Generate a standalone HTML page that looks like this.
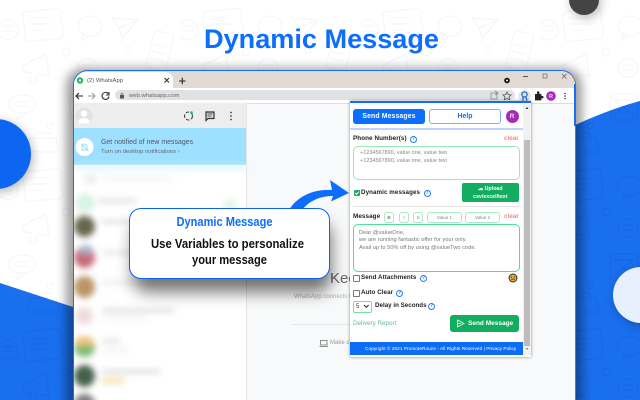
<!DOCTYPE html>
<html><head><meta charset="utf-8"><style>
html,body{margin:0;padding:0;width:640px;height:400px;overflow:hidden;background:#fff;font-family:"Liberation Sans",sans-serif}
#w{position:absolute;left:0;top:0;width:640px;height:400px;overflow:hidden;filter:blur(.3px)}
.a{position:absolute}
.t{position:absolute;white-space:nowrap;line-height:10px;height:10px}
.b{font-weight:bold;color:#222}
.q{position:absolute;width:5px;height:5px;border:1px solid #2b7cf0;border-radius:50%;font:bold 5px/5px "Liberation Sans",sans-serif;color:#2b7cf0;text-align:center}
.cb{position:absolute;width:5px;height:5px;border:.8px solid #777;border-radius:1px;background:#fff}
.chip{position:absolute;top:212px;height:9px;border:1px solid #a9e9c4;border-radius:3px;font:4.6px/9px "Liberation Sans",sans-serif;color:#7a8a80;text-align:center}
</style></head><body><div id="w">
<svg class="a" style="left:0;top:0" width="640" height="400" viewBox="0 0 640 400">
<defs>
<g id="dd" fill="none" stroke-width="1" stroke-linejoin="round" stroke-linecap="round">
<rect x="24" y="6" width="38" height="30" rx="4" transform="rotate(-6 43 21)"/>
<path d="M30 14h18M30 20h22M30 26h14"/>
<ellipse cx="90" cy="22" rx="12" ry="10"/><path d="M84 30l-3 7 8-5"/>
<path d="M112 14l26 2-16 18-3-10z M119 24l19-8"/>
<rect x="150" y="28" width="20" height="38" rx="3" transform="rotate(14 160 47)"/>
<path d="M153 40l13 3M151 47l13 3M150 54l13 3"/>
<circle cx="8" cy="26" r="10"/><path d="M3 22h10M3 27h10"/>
<path d="M22 62l24-12 3 22-12-2-2 10-5-2 1-9-7-1z"/>
<circle cx="66" cy="48" r="4"/><circle cx="128" cy="46" r="3"/>
<ellipse cx="88" cy="64" rx="10" ry="9"/><path d="M83 61h10M83 66h10"/>
<rect x="70" y="90" width="28" height="26" rx="3"/><path d="M70 92l14 12 14-12M70 114l14-10 14 10M75 96h18"/>
<ellipse cx="22" cy="100" rx="14" ry="9"/><path d="M14 98h16M14 102h16M20 109l-4 7 9-6"/>
<path d="M120 78c8-6 16 0 14 8l-8 12-8-11c-2-4-1-7 2-9z"/><circle cx="126" cy="85" r="3"/>
<circle cx="155" cy="112" r="11"/><path d="M146 108c5 3 12 3 18 0M150 120c3-6 3-12 0-17M160 120c-3-6-3-12 0-17"/>
<circle cx="112" cy="112" r="4"/><circle cx="50" cy="122" r="3"/>
<path d="M30 134h26l3 14H27z M36 134v-5h14v5"/>
<path d="M100 132l24-6-4 20-8-6-6 6z"/>
<path d="M144 136c6-5 20-4 24 2l-4 12-18 2z"/>
</g>
<pattern id="pw" x="0" y="4" width="180" height="160" patternUnits="userSpaceOnUse"><use href="#dd" stroke="#f3f5fa"/></pattern>
<pattern id="pb" x="0" y="4" width="180" height="160" patternUnits="userSpaceOnUse"><use href="#dd" stroke="#1767e2"/></pattern>
<filter id="sb" x="-50%" y="-50%" width="200%" height="200%"><feGaussianBlur stdDeviation="5"/></filter>
</defs>
<rect width="640" height="400" fill="#fff"/>
<rect width="640" height="400" fill="url(#pw)"/>
<path d="M0 283L73 307 300 340 480 190 575 125Q610 109 640 101V400H0Z" fill="#1a6fee"/>
<path d="M0 283L73 307 300 340 480 190 575 125Q610 109 640 101V400H0Z" fill="url(#pb)"/>
<circle cx="-2" cy="157" r="35" fill="#000" opacity=".28" filter="url(#sb)"/>
<circle cx="-4" cy="154" r="35" fill="#0d66f2"/>
<circle cx="643" cy="298" r="28" fill="#000" opacity=".28" filter="url(#sb)"/>
<circle cx="641" cy="295" r="28" fill="#e8f0fd"/>
<circle cx="586" cy="3" r="15" fill="#000" opacity=".28" filter="url(#sb)"/>
<circle cx="584" cy="0" r="15" fill="#444"/>
<text x="204" y="48" font-family="Liberation Sans" font-weight="bold" font-size="27" fill="#0d6efd" textLength="235" lengthAdjust="spacingAndGlyphs">Dynamic Message</text>
</svg>

<!-- window shadow -->
<div class="a" style="left:66px;top:68px;width:516px;height:340px;background:rgba(0,0,0,.38);border-radius:18px 18px 0 0;filter:blur(5px)"></div>

<!-- browser window -->
<div class="a" style="left:73px;top:70px;width:501px;height:340px;border:1.5px solid #1a6ff0;border-right-color:#6e7480;border-radius:15px 15px 0 0;background:#f8f9fa;overflow:hidden">
 <div class="a" style="left:0;top:0;width:501px;height:17px;background:#e3dad6"></div>
 <div class="a" style="left:0;top:1px;width:99px;height:16px;background:#fff;border-radius:8px 8px 0 0"></div>
 <div class="a" style="left:0;top:17px;width:501px;height:15px;background:#fff;border-bottom:1px solid #ddd"></div>
 <div class="a" style="left:41px;top:19px;width:400px;height:10px;background:#dfe1e5;border-radius:5px"></div>
 <!-- WA left -->
 <div class="a" style="left:0;top:32px;width:172px;height:310px;background:#fff;border-right:1px solid #e6e6e6"></div>
 <div class="a" style="left:0;top:32px;width:172px;height:25px;background:#ededed"></div>
 <div class="a" style="left:0;top:57px;width:172px;height:37px;background:#9de0ff"></div>
 <div class="a" style="left:0;top:94px;width:172px;height:240px;overflow:hidden;filter:blur(3.2px)">
  <div class="a" style="left:-4px;top:-4px;width:180px;height:8px;background:#d5f2fd"></div>
  <div class="a" style="left:10px;top:9px;width:14px;height:10px;background:#eee;border-radius:5px"></div><div class="a" style="left:28px;top:12px;width:70px;height:3px;background:#eee"></div>
  <div class="a" style="left:1px;top:29px;width:20px;height:18px;background:#d6f3e3;border-radius:50%"></div><div class="a" style="left:24px;top:34px;width:38px;height:4px;background:#ddd"></div><div class="a" style="left:150px;top:34px;width:12px;height:10px;background:#def5e6;border-radius:50%"></div>
  <div class="a" style="left:0;top:51px;width:21px;height:21px;background:#66674c;border-radius:50%"></div><div class="a" style="left:28px;top:55px;width:50px;height:3px;background:#d4d4d4"></div>
  <div class="a" style="left:0;top:82px;width:21px;height:21px;background:#c96a78;border-radius:50%"></div><div class="a" style="left:5px;top:80px;width:14px;height:10px;background:#a9b3c8;border-radius:50%"></div><div class="a" style="left:28px;top:86px;width:40px;height:3px;background:#ddd"></div>
  <div class="a" style="left:0;top:111px;width:21px;height:22px;background:#bd9468;border-radius:50%"></div><div class="a" style="left:28px;top:116px;width:32px;height:3px;background:#e5e5e5"></div>
  <div class="a" style="left:1px;top:142px;width:18px;height:18px;background:#f0dcdc;border-radius:50%"></div><div class="a" style="left:28px;top:144px;width:72px;height:3px;background:#d0d0d0"></div><div class="a" style="left:28px;top:152px;width:45px;height:2px;background:#e8e8e8"></div>
  <div class="a" style="left:0;top:171px;width:21px;height:11px;background:#ecc27e;border-radius:10px 10px 0 0"></div><div class="a" style="left:0;top:181px;width:21px;height:11px;background:#7fbb77;border-radius:0 0 10px 10px"></div><div class="a" style="left:28px;top:175px;width:18px;height:3px;background:#d6d6d6"></div><div class="a" style="left:28px;top:184px;width:28px;height:2px;background:#e5e5e5"></div>
  <div class="a" style="left:0;top:200px;width:21px;height:22px;background:#46604a;border-radius:50%"></div><div class="a" style="left:28px;top:205px;width:58px;height:3px;background:#cfcfcf"></div><div class="a" style="left:28px;top:213px;width:22px;height:5px;background:#f4dea0"></div>
  <div class="a" style="left:0;top:229px;width:21px;height:21px;background:#777;border-radius:50%"></div>
 </div>
</div>
<div class="a" style="left:574px;top:84px;width:1.500px;height:42px;background:#1a6ff0"></div>

<!-- toolbar icons -->
<svg class="a" style="left:0;top:0" width="640" height="400" viewBox="0 0 640 400" fill="none">
 <circle cx="80" cy="80.500" r="3.200" fill="#1db954"/><circle cx="80" cy="80.500" r="1.200" fill="#fff"/>
 <path d="M164.500 78l4.500 4.500m0-4.500l-4.500 4.500" stroke="#333" stroke-width="1.100"/>
 <path d="M179 81h6.500m-3.250-3.250v6.500" stroke="#222" stroke-width="1.100"/>
 <circle cx="507" cy="80.500" r="2.800" fill="#111"/><circle cx="507" cy="80.500" r="1" fill="#eee"/>
 <path d="M523 76.500h5" stroke="#555"/><rect x="543" y="74" width="4" height="4" stroke="#777" stroke-width=".8"/><path d="M562 74l4.500 4.500m0-4.500l-4.500 4.500" stroke="#666" stroke-width=".8"/>
 <path d="M83 96h-7m3-3l-3 3 3 3" stroke="#222" stroke-width="1.100"/>
 <path d="M88 96h7m-3-3l3 3-3 3" stroke="#999" stroke-width="1.100"/>
 <path d="M108.500 94a3.500 3.500 0 1 0 .5 2.500M109 92v3h-3" stroke="#333" stroke-width="1.100"/>
 <rect x="120" y="95" width="4" height="3.500" fill="#555"/><path d="M121 95v-1a1 1 0 0 1 2 0v1" stroke="#555" stroke-width=".6"/>
 <path d="M491 93h6v6h-6zM495 91l3 2-3 2" stroke="#888" stroke-width=".8"/>
 <path d="M507 92l1.200 2.600 2.800.3-2 2 .6 2.800-2.600-1.400-2.600 1.400.6-2.800-2-2 2.800-.3z" stroke="#555" stroke-width=".8"/>
 <circle cx="524.500" cy="96" r="6" fill="#dbe4f0"/><circle cx="524.500" cy="94.500" r="2.600" stroke="#1554c0" stroke-width="1.100"/><path d="M523 97v3.500m3-3.200l1 3.200" stroke="#1554c0" stroke-width="1.100"/>
 <path d="M535 94h2v-1.500a1.200 1.200 0 0 1 2.400 0V94h2v2h1a1.200 1.200 0 0 1 0 2.400h-1v2h-6.400z" fill="#222"/>
 <circle cx="551" cy="96" r="4.800" fill="#a52bb5"/><text x="551" y="98" font-size="5.500" font-weight="bold" fill="#f3d8f6" text-anchor="middle" font-family="Liberation Sans">R</text>
 <circle cx="565" cy="93.500" r=".8" fill="#333"/><circle cx="565" cy="96" r=".8" fill="#333"/><circle cx="565" cy="98.500" r=".8" fill="#333"/>
 <!-- WA header -->
 <circle cx="84" cy="116" r="8.500" fill="#dfe3e5"/><circle cx="84" cy="113.500" r="3.200" fill="#fff"/><path d="M78 122c1-3 3-4 6-4s5 1 6 4c-3 2.500-9 2.500-12 0z" fill="#fff"/>
 <circle cx="188.500" cy="116" r="4" stroke="#444" stroke-width="1.100" stroke-dasharray="3.500 1.800"/><circle cx="191.500" cy="112.500" r="1.300" fill="#19b58c"/>
 <path d="M206 112h8v6.500h-6l-2 2z" stroke="#333" stroke-width="1.200" fill="#ddd"/><path d="M207.500 114h5m-5 2h4" stroke="#333" stroke-width=".7"/>
 <circle cx="231" cy="112.500" r=".9" fill="#444"/><circle cx="231" cy="116" r=".9" fill="#444"/><circle cx="231" cy="119.500" r=".9" fill="#444"/>
 <!-- banner -->
 <circle cx="84.500" cy="147" r="9" fill="#fff"/><path d="M82 150v-3.500a2.500 2.500 0 0 1 5 0V150zM81 150h7M81.500 144l7 7" stroke="#9ddcf7" stroke-width="1"/>
 <!-- right empty state -->
 <path d="M292 324.500h58" stroke="#e4e6e8"/>
 <rect x="320.500" y="340.500" width="6.500" height="4.500" stroke="#777" stroke-width=".8"/><path d="M319.500 346.500h8.500" stroke="#777" stroke-width=".8"/>
</svg>

<div class="t" style="left:87px;top:75.500px;font-size:5.900px;color:#555">(2) WhatsApp</div>
<div class="t" style="left:129px;top:91px;font-size:5.900px;color:#666">web.whatsapp.com</div>
<div class="t" style="left:101px;top:138px;font-size:6.900px;color:#556;letter-spacing:.05px">Get notified of new messages</div>
<div class="t" style="left:101px;top:147px;font-size:5.900px;color:#667">Turn on desktop notifications ›</div>
<div class="t" style="left:330px;top:274px;font-size:15px;color:#666">Kee</div>
<div class="t" style="left:294px;top:292px;font-size:6px;color:#aaa">WhatsApp connects t</div>
<div class="t" style="left:330px;top:338px;font-size:6px;color:#999">Make c</div>

<!-- popup -->
<div class="a" style="left:350px;top:101px;width:181px;height:254px;background:#fff;border-top:2px solid #0d6efd;box-shadow:0 0 3px rgba(0,0,0,.45)"></div>
<div class="a" style="left:523px;top:103px;width:8px;height:252px;background:#f1f1f1"></div>
<div class="a" style="left:524px;top:140px;width:6px;height:206px;background:#bdbdbd"></div>
<svg class="a" style="left:523px;top:103px" width="8" height="252"><path d="M2.500 6L4 4l1.500 2z" fill="#333"/><path d="M2.500 245l1.500 2 1.500-2z" fill="#888"/></svg>

<div class="a" style="left:353px;top:109px;width:72px;height:15px;background:#0d6efd;border-radius:3px;font:bold 6.900px/15px 'Liberation Sans',sans-serif;color:#fff;text-align:center;letter-spacing:.12px">Send Messages</div>
<div class="a" style="left:429px;top:109px;width:70px;height:13px;border:1px solid #7db0fb;border-radius:3px;font:bold 6.900px/13px 'Liberation Sans',sans-serif;color:#0d6efd;text-align:center">Help</div>
<div class="a" style="left:505.500px;top:109.500px;width:13px;height:13px;background:#a52bb5;border-radius:50%;font:bold 6.500px/13px 'Liberation Sans',sans-serif;color:#f3d8f6;text-align:center">R</div>
<div class="a" style="left:350px;top:128px;width:173px;height:2px;background:#bcd4ff"></div>

<div class="t b" style="left:353px;top:134px;font-size:6.300px;letter-spacing:.08px">Phone Number(s)</div>
<div class="q" style="left:410px;top:136px">?</div>
<div class="t" style="left:504px;top:134px;font-size:6.300px;color:#ef8a8a;font-weight:bold">clear</div>
<div class="a" style="left:353px;top:146px;width:165px;height:32px;border:1.300px solid #98e8bd;border-radius:5px"></div>
<div class="t" style="left:360px;top:148px;font-size:5.500px;color:#888">+1234567890, value one, value two</div>
<div class="t" style="left:360px;top:155.500px;font-size:5.500px;color:#888">+1234567890, value one, value two</div>

<div class="a" style="left:353.500px;top:190px;width:6px;height:6px;background:#17a95f;border-radius:1px"></div>
<svg class="a" style="left:353.500px;top:190px" width="6" height="6"><path d="M1.200 3l1.300 1.400L4.800 1.700" stroke="#fff" fill="none"/></svg>
<div class="t b" style="left:361px;top:188px;font-size:6.200px;letter-spacing:.1px">Dynamic messages</div>
<div class="q" style="left:423.500px;top:190px">?</div>
<div class="a" style="left:461.500px;top:183px;width:57.500px;height:19px;background:#13ad5f;border-radius:2px;font:bold 5.300px/8px 'Liberation Sans',sans-serif;color:#fff;text-align:center;padding-top:1.500px;box-sizing:border-box">☁ Upload<br>csv/excel/text</div>
<div class="a" style="left:353px;top:205.500px;width:167px;height:1px;background:#e4e4e4"></div>

<div class="t b" style="left:353px;top:212px;font-size:6.300px;letter-spacing:.08px">Message</div>
<div class="chip" style="left:384px;width:8px;font-weight:bold">B</div>
<div class="chip" style="left:399px;width:8px">I</div>
<div class="chip" style="left:413px;width:8px">S</div>
<div class="chip" style="left:427px;width:33px">Value 1</div>
<div class="chip" style="left:465px;width:33px">Value 2</div>
<div class="t" style="left:504px;top:212px;font-size:6.300px;color:#ef8a8a;font-weight:bold">clear</div>
<div class="a" style="left:353px;top:224px;width:165px;height:45.500px;border:1.300px solid #4fdc9c;border-radius:5px"></div>
<div class="t" style="left:359px;top:227.500px;font-size:5.600px;color:#777;letter-spacing:.05px">Dear @valueOne,</div>
<div class="t" style="left:359px;top:235px;font-size:5.600px;color:#777;letter-spacing:.05px">we are running fantastic offer for your only.</div>
<div class="t" style="left:359px;top:242.500px;font-size:5.600px;color:#777;letter-spacing:.05px">Avail up to 50% off by using @valueTwo code.</div>

<div class="cb" style="left:353px;top:275px"></div>
<div class="t b" style="left:361px;top:273px;font-size:6.200px;letter-spacing:.08px">Send Attachments</div>
<div class="q" style="left:420px;top:275px">?</div>
<svg class="a" style="left:508px;top:273px" width="10" height="10"><circle cx="5" cy="5" r="4.500" fill="#3a3a3a"/><circle cx="5" cy="5" r="3.400" fill="#e8b23a"/><path d="M3 6.200h4" stroke="#7a4a10"/><circle cx="3.600" cy="4" r=".6" fill="#333"/><circle cx="6.400" cy="4" r=".6" fill="#333"/></svg>
<div class="cb" style="left:353px;top:290px"></div>
<div class="t b" style="left:361px;top:288px;font-size:6.200px;letter-spacing:.08px">Auto Clear</div>
<div class="q" style="left:396px;top:290px">?</div>
<div class="a" style="left:353px;top:301px;height:10px;border:1px solid #73dfa9;border-radius:2px;font:6px/10px 'Liberation Sans',sans-serif;color:#333;padding-left:2px;width:15px">5</div>
<svg class="a" style="left:363px;top:304px" width="7" height="5"><path d="M1 1l2.300 2.300L5.600 1" stroke="#222" fill="none"/></svg>
<div class="t b" style="left:375px;top:301px;font-size:6.200px;letter-spacing:.02px">Delay in Seconds</div>
<div class="q" style="left:428px;top:303px">?</div>
<div class="t" style="left:353px;top:319px;font-size:6.300px;color:#5fc08f">Delivery Report</div>
<div class="a" style="left:450px;top:315px;width:69px;height:17px;background:#13ad5f;border-radius:3px"></div>
<svg class="a" style="left:456px;top:319px" width="10" height="9"><path d="M1.500 1l6.500 3.500L1.500 8zM1.500 4.500H5" stroke="#fff" fill="none" stroke-width=".8"/></svg>
<div class="t" style="left:468px;top:318.500px;font-size:6.500px;font-weight:bold;color:#fff">Send Message</div>
<div class="a" style="left:350px;top:342px;width:173px;height:13px;background:#0c6cf5"></div>
<div class="t" style="left:365px;top:343.500px;font-size:4.700px;color:#fff;letter-spacing:.06px">Copyright © 2021 PromoteRouze - All Rights Reserved | Privacy Policy</div>

<!-- arrow + callout -->
<svg class="a" style="left:0;top:0" width="640" height="400" viewBox="0 0 640 400">
 <path d="M289 210C297 197 312 189 332 190L330 180 349 193 331 201.500 333 196C320 196 309 201 302 210Z" fill="#0d6efd"/>
</svg>
<div class="a" style="left:133px;top:222px;width:198px;height:70px;background:rgba(0,0,0,.55);border-radius:14px;filter:blur(8px)"></div>
<div class="a" style="left:129px;top:208px;width:199px;height:68.500px;background:#fff;border:1.500px solid #1160ee;border-radius:12px"></div>
<svg class="a" style="left:0;top:0" width="640" height="400" viewBox="0 0 640 400" font-family="Liberation Sans" font-weight="bold">
 <text x="176.500" y="226" font-size="12.500" fill="#0d6efd" textLength="96" lengthAdjust="spacingAndGlyphs">Dynamic Message</text>
 <text x="151" y="248" font-size="12.500" fill="#111" textLength="153" lengthAdjust="spacingAndGlyphs">Use Variables to personalize</text>
 <text x="192" y="264" font-size="12.500" fill="#111" textLength="75" lengthAdjust="spacingAndGlyphs">your message</text>
</svg>
</div></body></html>
